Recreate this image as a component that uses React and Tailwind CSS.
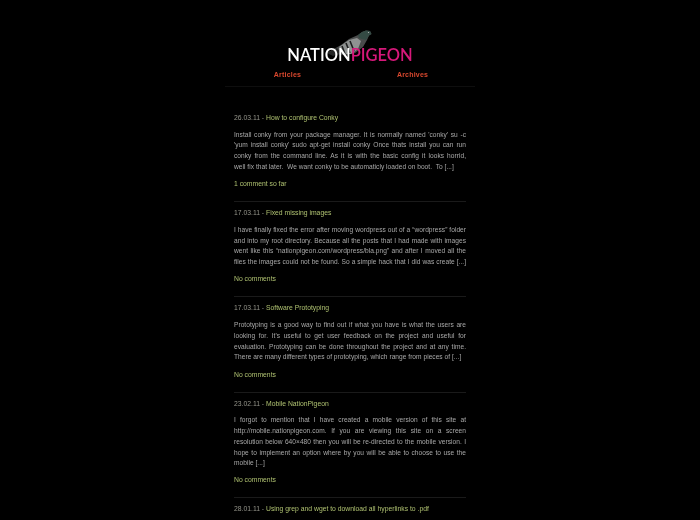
const posts = [
  { date: "26.03.11", title: "How to configure Conky", lines: ["Install conky from your package manager.  It is normally named 'conky' su -c", "'yum install conky' sudo apt-get install conky Once thats install you can run", "conky from the command line.  As it is with the basic config it looks horrid,", "well fix that later.  We want conky to be automaticly loaded on boot.  To [...]"], comment: "1 comment so far" },
  { date: "17.03.11", title: "Fixed missing images", lines: ["I have finally fixed the error after moving wordpress out of a “wordpress” folder", "and into my root directory. Because all the posts that I had made with images", "went like this “nationpigeon.com/wordpress/bla.png” and after I moved all the", "files the images could not be found. So a simple hack that I did was create [...]"], comment: "No comments", justifyLast: true },
  { date: "17.03.11", title: "Software Prototyping", lines: ["Prototyping is a good way to find out if what you have is what the users are", "looking for. It's useful to get user feedback on the project and useful for", "evaluation. Prototyping can be done throughout the project and at any time.", "There are many different types of prototyping, which range from pieces of [...]"], comment: "No comments" },
  { date: "23.02.11", title: "Mobile NationPigeon", lines: ["I forgot to mention that I have created a mobile version of this site at", "http://mobile.nationpigeon.com. If you are viewing this site on a screen", "resolution below 640×480 then you will be re-directed to the mobile version. I", "hope to implement an option where by you will be able to choose to use the", "mobile [...]"], comment: "No comments" },
  { date: "28.01.11", title: "Using grep and wget to download all hyperlinks to .pdf", lines: [], comment: "" },
];

function Pigeon() {
  return (
    <svg width="50" height="34" viewBox="0 0 50 34" className="absolute left-[100px] top-[27px]">
      <path d="M2 26 L16 18 L24 12 L33 8 L37 5 L41 3.5 L45 4 L46.5 7 L44 8.5 L42 13 L38 20 L30 26 L20 28 Z" fill="#4a4c4c" />
      <path d="M14 20 L24 13 L32 11 L36 14 L33 22 L26 27 L18 27 Z" fill="#8f9291" />
      <path d="M17 19 L20 27 M21 16 L25 26 M25 14 L29 24" stroke="#1f2020" strokeWidth="1.6" fill="none" />
      <path d="M33 8 L37 5 L41 3.5 L45 4 L46.5 7 L44 8.5 L41 13 L37 12 L34 11 Z" fill="#344a44" />
      <path d="M2 26 L12 21 L16 26 L8 29 Z" fill="#242525" />
      <circle cx="43.5" cy="5.5" r="0.6" fill="#bbb" />
    </svg>
  );
}

function Post({ post, last }) {
  return (
    <article className={last ? "" : "border-b border-[#1a1a1a] pb-[12px]"}>
      <h2 className="h-[11px] whitespace-nowrap text-[6.8px] font-normal leading-[11px] text-[#94948a]">
        {post.date} - <a className="text-[#aec070]">{post.title}</a>
      </h2>
      {post.lines.length > 0 && (
        <div className="mt-[6.6px] text-[6.6px] leading-[10.8px] tracking-[0.03px] text-[#a8a8a8]">
          {post.lines.map((line, i) => (
            <p key={i} className={i < post.lines.length - 1 || post.justifyLast ? "whitespace-nowrap text-justify [text-align-last:justify]" : "whitespace-pre"}>{line}</p>
          ))}
        </div>
      )}
      {post.comment && <p className="mt-[5.4px] text-[6.8px] leading-[11px] text-[#aec070]">{post.comment}</p>}
    </article>
  );
}

export default function App() {
  return (
    <div className="h-[520px] w-[700px] overflow-hidden bg-black font-['Liberation_Sans',sans-serif]">
      <div className="relative mx-auto w-[250px] blur-[0.3px]">
        <Pigeon />
        <header className="h-[87px] border-b border-[#0e0e0e]">
          <div className="relative pt-[44px] text-center font-['Lato',sans-serif] text-[16.5px] leading-[22px] font-semibold">
            <span className="text-white">NATION</span><span className="text-[#d6187a]">PIGEON</span>
          </div>
          <nav className="mt-[4px] grid grid-cols-2 text-center text-[7px] leading-[10px] font-bold tracking-[0.2px] text-[#d9482e]">
            <a>Articles</a>
            <a>Archives</a>
          </nav>
        </header>
        <main className="px-[9px] pt-[25px]">
          {posts.map((p, i) => (
            <div key={i} className={i ? "pt-[5px]" : ""}>
              <Post post={p} last={i === posts.length - 1} />
            </div>
          ))}
        </main>
      </div>
    </div>
  );
}
